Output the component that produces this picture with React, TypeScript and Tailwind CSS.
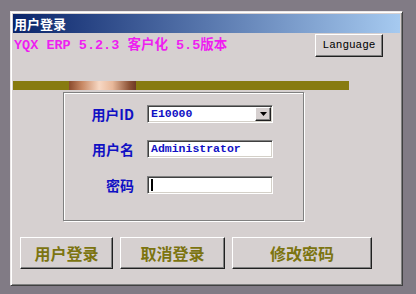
import React from "react";

const cjk = '"Noto Sans CJK SC", "Liberation Sans", sans-serif';
const mono = '"Liberation Mono", "Noto Sans CJK SC", monospace';

function RaisedButton({ className, children, style }: { className?: string; children: React.ReactNode; style?: React.CSSProperties }) {
  return (
    <div
      className={
        "flex items-center justify-center bg-[#d6d0d0] border-t border-l border-t-white border-l-white border-r border-b border-r-[#202020] border-b-[#202020] shadow-[inset_-1px_-1px_0_#808080] " +
        (className ?? "")
      }
      style={style}
    >
      {children}
    </div>
  );
}

function Sunken({ className, children }: { className?: string; children?: React.ReactNode }) {
  return (
    <div
      className={
        "flex items-center bg-white border-t border-l border-t-[#808080] border-l-[#808080] border-r border-b border-r-white border-b-white shadow-[inset_1px_1px_0_#404040,inset_-1px_-1px_0_#d4d0c8] " +
        (className ?? "")
      }
    >
      {children}
    </div>
  );
}

export default function App() {
  return (
    <div className="w-[416px] h-[294px] bg-[#817b85] pt-[11px] pl-[10px] overflow-hidden">
      <div className="w-[393px] h-[275px] bg-[#d6d0d0] border-t border-l border-t-[#ece8e8] border-l-[#ece8e8] border-r border-b border-r-[#404040] border-b-[#404040] shadow-[inset_1px_1px_0_#ffffff,inset_-1px_-1px_0_#808080] p-[2px] flex flex-col">
        {/* title bar */}
        <div
          className="h-[19px] flex items-center pl-[1px] bg-[linear-gradient(to_right,#0a246a,#a6caf0)] text-white font-bold text-[13px] leading-none"
          style={{ fontFamily: cjk }}
        >
          用户登录
        </div>
        {/* header row */}
        <div className="flex items-start justify-between h-[23px]">
          <div
            className="text-[#ee1ef0] font-bold text-[13.5px] leading-none mt-[6px] pl-[1px] whitespace-pre"
            style={{ fontFamily: mono }}
          >
            YQX ERP 5.2.3 客户化 5.5版本
          </div>
          <RaisedButton className="w-[68px] h-[23px] mr-[17px] mt-[1px]">
            <span className="text-[11px] text-black leading-none" style={{ fontFamily: mono }}>
              Language
            </span>
          </RaisedButton>
        </div>
        {/* olive bar */}
        <div className="mt-[25px] h-[9px] w-[336px] bg-[#877b10] flex">
          <div className="ml-[56px] w-[67px] h-full bg-[linear-gradient(to_right,#8a4a2c,#c98a66_20%,#f7d8c4_45%,#e8b89a_65%,#8c5236_90%,#6e3a26)]" />
        </div>
        {/* group panel */}
        <div className="ml-[50px] mt-[2px] w-[241px] h-[129px] border border-[#808080] shadow-[inset_1px_1px_0_#ffffff,1px_1px_0_#ffffff] grid grid-cols-[70px_1fr] gap-x-[13px] content-start pt-[12px]">
          <div className="h-[18px] flex items-center justify-end text-[#1010c4] font-bold text-[14px] leading-none" style={{ fontFamily: cjk }}>
            用户ID
          </div>
          <Sunken className="w-[126px] h-[18px] justify-between">
            <span className="pl-[3px] text-[#1010c4] font-bold text-[11.5px] leading-none" style={{ fontFamily: mono }}>
              E10000
            </span>
            <RaisedButton className="w-[16px] h-[14px] mr-[1px]">
              <svg width="7" height="4" viewBox="0 0 7 4">
                <path d="M0 0H7L3.5 4Z" fill="#000" />
              </svg>
            </RaisedButton>
          </Sunken>
          <div className="h-[18px] mt-[17px] flex items-center justify-end text-[#1010c4] font-bold text-[14px] leading-none" style={{ fontFamily: cjk }}>
            用户名
          </div>
          <Sunken className="w-[126px] h-[18px] mt-[17px]">
            <span className="pl-[3px] text-[#1010c4] font-bold text-[11.5px] leading-none" style={{ fontFamily: mono }}>
              Administrator
            </span>
          </Sunken>
          <div className="h-[18px] mt-[18px] flex items-center justify-end text-[#1010c4] font-bold text-[14px] leading-none" style={{ fontFamily: cjk }}>
            密码
          </div>
          <Sunken className="w-[126px] h-[18px] mt-[18px]">
            <div className="ml-[3px] w-[2px] h-[12px] bg-black" />
          </Sunken>
        </div>
        {/* buttons */}
        <div className="flex gap-[7px] pl-[7px] mt-[16px]">
          {[
            ["用户登录", "w-[93px]"],
            ["取消登录", "w-[105px]"],
            ["修改密码", "w-[140px]"],
          ].map(([t, w]) => (
            <RaisedButton key={t} className={w + " h-[32px]"}>
              <span className="text-[#7c7410] font-bold text-[16px] leading-none" style={{ fontFamily: cjk }}>
                {t}
              </span>
            </RaisedButton>
          ))}
        </div>
      </div>
    </div>
  );
}
